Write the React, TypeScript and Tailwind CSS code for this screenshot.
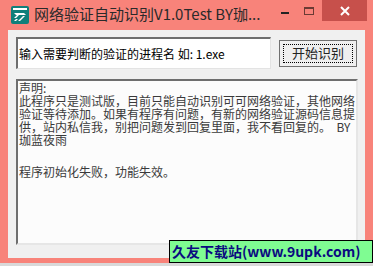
import React from 'react';

const cjk = { fontFamily: '"SimSun", "Noto Sans CJK SC", "Liberation Sans", sans-serif' };
const ui = { fontFamily: '"Microsoft YaHei", "Noto Sans CJK SC", "Liberation Sans", sans-serif' };

const notice = [
	'声明:',
	'此程序只是测试版，目前只能自动识别可可网络验证，其他网络',
	'验证等待添加。如果有程序有问题，有新的网络验证源码信息提',
	'供，站内私信我，别把问题发到回复里面，我不看回复的。  BY',
	'珈蓝夜雨',
];

const AppIcon: React.FC = () => (
	<svg width="18" height="18" viewBox="0 0 18 18">
		<rect x="0" y="0" width="18" height="18" rx="2" fill="#0f7f7a" />
		<rect x="2" y="2" width="14" height="2" fill="#fff" />
		<path d="M3 7 H13 L15 9 H5 Z" fill="#fff" />
		<path d="M3 12 L6 9 H8 L5 12 Z M7 15 L12 10 H14 L9 15 Z M3 15 L5 13 H7 L5 15 Z" fill="#fff" />
	</svg>
);

const App: React.FC = () => {
	return (
		<div className="relative w-[373px] h-[266px] bg-[#f8837a] overflow-hidden">
			{/* Title bar */}
			<div className="flex items-start h-[30px]">
				<div className="ml-[11px] mt-[6px]">
					<AppIcon />
				</div>
				<div
					className="ml-[5px] mt-[4px] text-[15px] leading-[20px] text-[#2a2a2a] whitespace-nowrap"
					style={ui}
				>
					网络验证自动识别V1.0Test BY珈...
				</div>
				<div className="ml-auto flex items-start">
					<div className="w-[22px] h-[21px] flex items-center justify-center">
						<div className="w-[8px] h-[2px] bg-[#222] mt-[5px]" />
					</div>
					<div className="w-[22px] h-[21px] flex items-center justify-center ml-[2px]">
						<div className="w-[10px] h-[8px] border border-[#6b3a34] border-t-2" />
					</div>
					<div className="w-[45px] h-[21px] bg-[#c7504b] flex items-center justify-center mr-[6px] ml-[2px]">
						<svg width="10" height="10" viewBox="0 0 10 10">
							<path d="M1 1 L9 9 M9 1 L1 9" stroke="#fff" strokeWidth="2" />
						</svg>
					</div>
				</div>
			</div>

			{/* Client area */}
			<div className="mx-[8px] h-[228px] bg-[#f0f0f0] px-[8px] pt-[7px]">
				<div className="flex items-center">
					<div
						className="w-[256px] h-[32px] bg-white border-t-2 border-l-2 border-t-[#6e6e6e] border-l-[#6e6e6e] border-b border-r border-b-[#e3e3e3] border-r-[#e3e3e3] flex items-center pl-[1px] text-[12px] text-black whitespace-nowrap"
						style={cjk}
					>
						输入需要判断的验证的进程名 如: 1.exe
					</div>
					<button
						className="ml-[8px] w-[78px] h-[27px] bg-[#efefef] border border-[#707070] flex items-center justify-center p-[3px]"
						style={cjk}
					>
						<span className="w-full h-full border border-dotted border-black flex items-center justify-center text-[13px] text-[#222]">
							开始识别
						</span>
					</button>
				</div>

				<div
					className="mt-[10px] w-[342px] h-[166px] bg-[#fcfcfc] border-t-2 border-l-2 border-t-[#6e6e6e] border-l-[#6e6e6e] border-b-2 border-r-2 border-b-[#e6e6e6] border-r-[#e6e6e6] pl-[1px] text-[12px] leading-[13px] text-[#3a3a3a]"
					style={cjk}
				>
					{notice.map((line, i) => (
						<div key={i} className="whitespace-pre h-[13px]">
							{line}
						</div>
					))}
					<div className="whitespace-pre mt-[19px] h-[13px]">程序初始化失败，功能失效。</div>
				</div>
			</div>

			{/* Watermark */}
			<div
				className="absolute left-[169px] top-[240px] w-[204px] h-[23px] bg-[#7ffc92] border border-black flex items-center pl-[2px] text-[14px] font-bold text-[#0a0a80] whitespace-nowrap"
				style={ui}
			>
				久友下载站(www.9upk.com)
			</div>
			<div className="absolute left-0 bottom-0 w-full h-[3px] bg-[#d9d9d9]" />
		</div>
	);
};

export default App;
